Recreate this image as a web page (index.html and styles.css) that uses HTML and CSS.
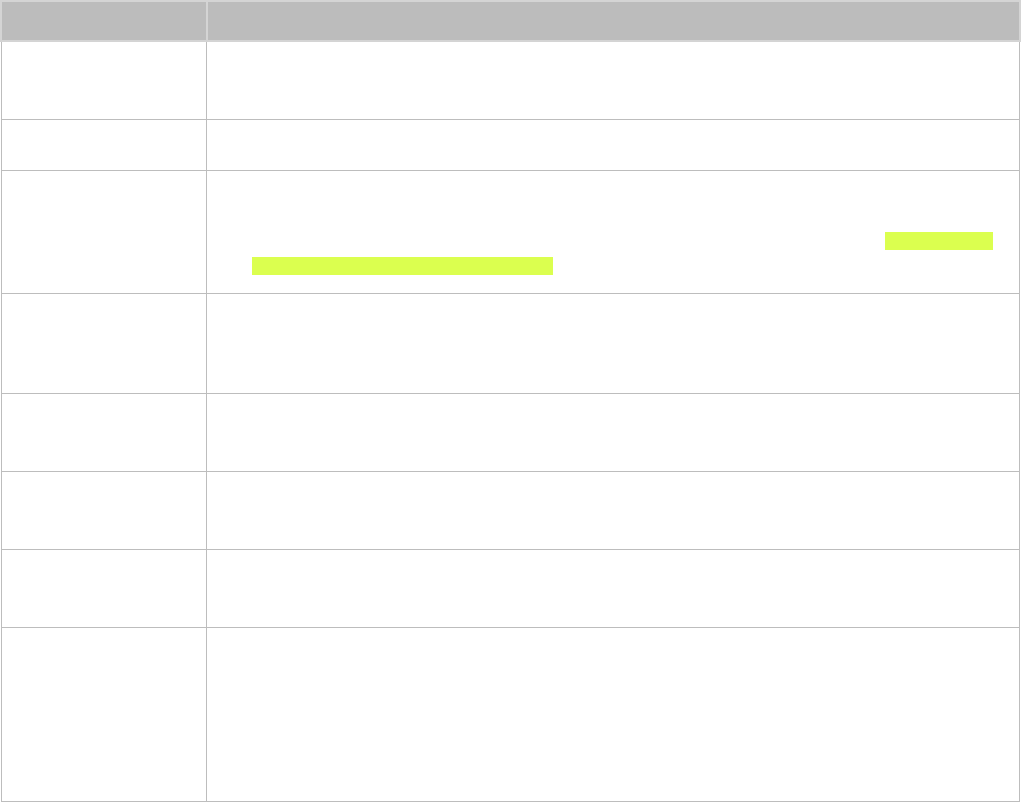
FILE: index.html
```html
<!DOCTYPE html>
<html>
<head>
<meta charset="utf-8">
<link rel="stylesheet" href="styles.css">
</head>
<body>
<div class="table">
  <div class="head">
    <div class="th"></div>
    <div class="th"></div>
  </div>
  <div class="body">
    <div class="row r1"><div class="c1"></div><div class="c2"></div></div>
    <div class="row r2"><div class="c1"></div><div class="c2"></div></div>
    <div class="row r3"><div class="c1"></div><div class="c2 marks"><span class="mark m1"></span><span class="mark m2"></span></div></div>
    <div class="row r4"><div class="c1"></div><div class="c2"></div></div>
    <div class="row r5"><div class="c1"></div><div class="c2"></div></div>
    <div class="row r6"><div class="c1"></div><div class="c2"></div></div>
    <div class="row r7"><div class="c1"></div><div class="c2"></div></div>
    <div class="row r8"><div class="c1"></div><div class="c2"></div></div>
  </div>
</div>
</body>
</html>
```
FILE: styles.css
```css
html, body {
  margin: 0;
  padding: 0;
  background: #ffffff;
  font-family: "Liberation Sans", Arial, sans-serif;
}
.table {
  width: 1021px;
}
.head {
  display: grid;
  grid-template-columns: 204px 811px;
  column-gap: 2px;
  padding: 2px;
  background: #d4d4d4;
}
.th {
  height: 38px;
  background: #bcbcbc;
}
.body {
  margin-left: 1px;
  width: 1018px;
  border-left: 1px solid #bdbdbd;
}
.row {
  display: grid;
  grid-template-columns: 205px 813px;
  border-bottom: 1px solid #bdbdbd;
}
.c1 {
  border-right: 1px solid #bdbdbd;
}
.c2 {
  border-right: 1px solid #bdbdbd;
}
.r1 { height: 77px; }
.r2 { height: 50px; }
.r3 { height: 122px; }
.r4 { height: 99px; }
.r5 { height: 77px; }
.r6 { height: 77px; }
.r7 { height: 77px; }
.r8 { height: 173px; }
.marks {
  display: flex;
  flex-direction: column;
  align-items: flex-start;
}
.mark {
  display: block;
  height: 18px;
  background: #dbff4f;
}
.m1 {
  margin-top: 61px;
  margin-left: 678px;
  width: 108px;
}
.m2 {
  margin-top: 7px;
  margin-left: 45px;
  width: 301px;
}
```
